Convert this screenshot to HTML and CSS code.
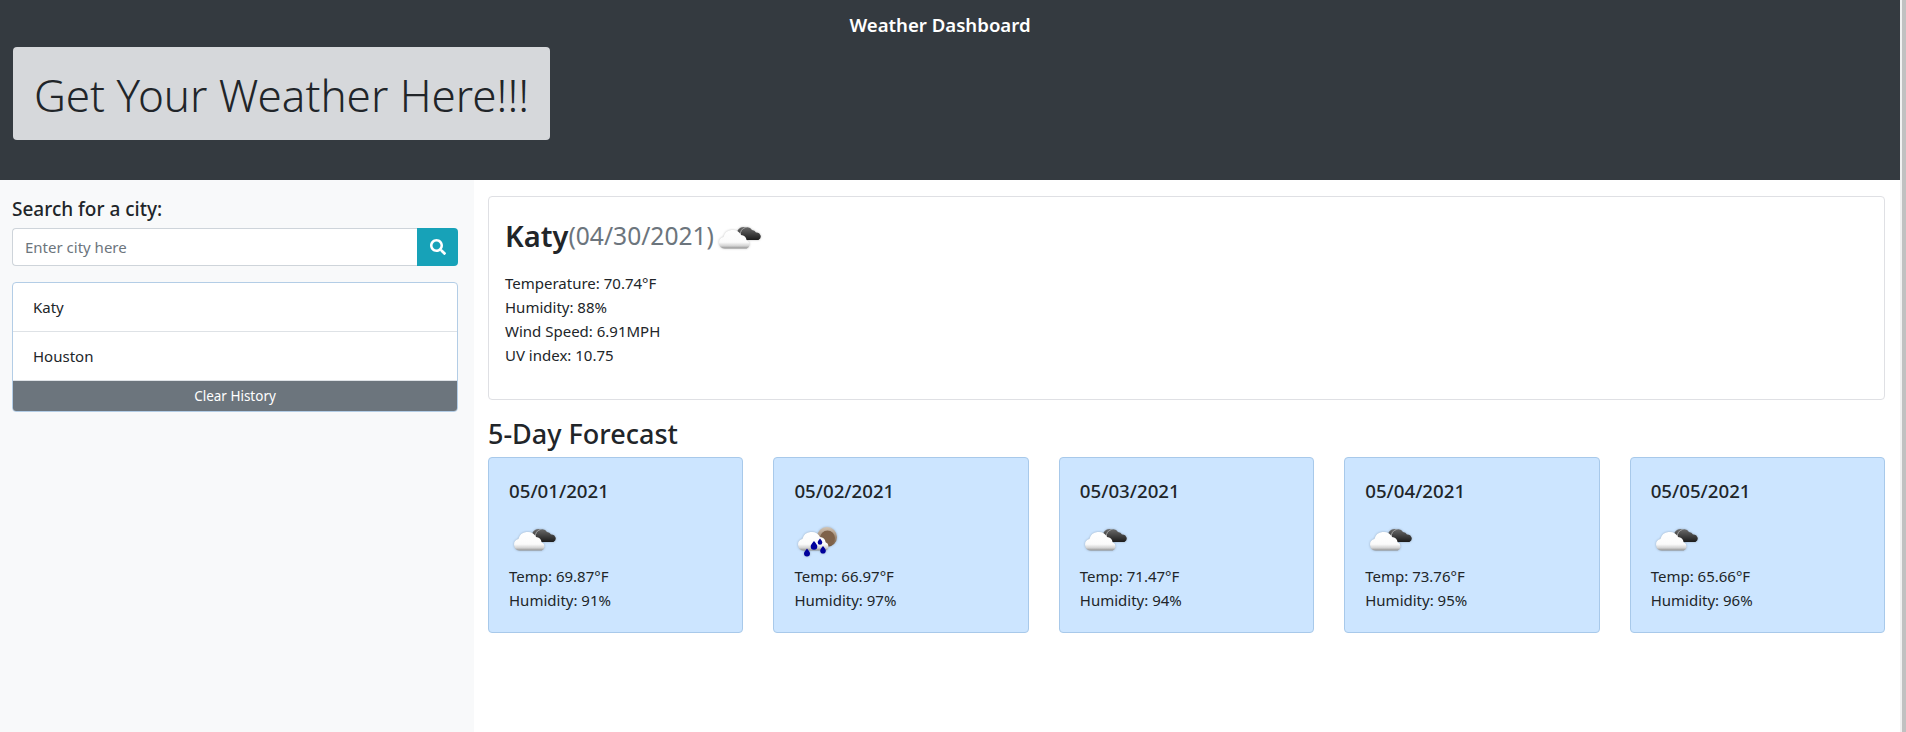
FILE: index.html
```html
<!DOCTYPE html>
<html lang="en">
<head>
    <meta charset="UTF-8">
    <title>Weather Dashboard</title>
    <link rel="stylesheet" href="styles.css">
</head>
<body>
    <!-- Shared weather icons -->
    <svg class="icon-defs" width="0" height="0">
        <defs>
            <linearGradient id="white-cloud" x1="0" y1="0" x2="0" y2="1">
                <stop offset="0" stop-color="#ffffff"/>
                <stop offset="0.66" stop-color="#fbfbfb"/>
                <stop offset="0.86" stop-color="#d2d2d2"/>
                <stop offset="1" stop-color="#8f8f8f"/>
            </linearGradient>
            <linearGradient id="dark-cloud" x1="0" y1="0" x2="0" y2="1">
                <stop offset="0" stop-color="#6a6a6a"/>
                <stop offset="1" stop-color="#1c1c1c"/>
            </linearGradient>
            <linearGradient id="brown-sun" x1="0" y1="0" x2="0" y2="1">
                <stop offset="0" stop-color="#d3c5b5"/>
                <stop offset="1" stop-color="#6f5238"/>
            </linearGradient>
            <symbol id="clouds" viewBox="0 0 50 50">
                <path d="M27 29a6.5 6.5 0 0 1 5-12.5a5.5 5.5 0 0 1 6 2.500a4.500 4.500 0 0 1 4 2.500a4 4 0 0 1 2.500 7.500h-13z" fill="url(#dark-cloud)"/>
                <path d="M26.500 24a6.500 6.500 0 0 1 5-7.500" fill="none" stroke="#a9a9a9" stroke-width="1"/>
                <path d="M11 37.500a5.800 5.800 0 0 1-1.600-11.400a9.500 9.500 0 0 1 17.600-2a6.200 6.200 0 0 1 5.600 5.200a4.400 4.400 0 0 1 .2 8.200z" fill="url(#white-cloud)"/>
            </symbol>
            <symbol id="rain" viewBox="0 0 50 50">
                <circle cx="33" cy="24" r="10" fill="url(#brown-sun)"/>
                <circle cx="33.500" cy="25" r="7.500" fill="#7f6249"/>
                <path d="M10 37.500a5.800 5.800 0 0 1-1.600-11.400a9.500 9.500 0 0 1 17.600-2a6.200 6.200 0 0 1 5.600 5.200a4.400 4.400 0 0 1 .2 8.200z" fill="url(#white-cloud)"/>
                <path d="M13 35.500c2 2.500 3 3.500 3 5a3 3 0 0 1-6 0c0-1.500 1-2.500 3-5z" fill="#00009c"/>
                <path d="M20 28c2.200 2.800 3.300 3.800 3.300 5.500a3.300 3.300 0 0 1-6.600 0c0-1.700 1.100-2.700 3.300-5.500z" fill="#00009c"/>
                <path d="M26 25.500c1.500 2 2.300 2.800 2.300 4a2.300 2.300 0 0 1-4.600 0c0-1.200.8-2 2.300-4z" fill="#00009c"/>
                <path d="M29 33c1.900 2.400 2.800 3.300 2.800 4.700a2.800 2.800 0 0 1-5.600 0c0-1.400.9-2.300 2.800-4.700z" fill="#00009c"/>
            </symbol>
        </defs>
    </svg>

    <div class="page">
        <div class="content">
            <header class="top-bar">
                <div class="brand">Weather Dashboard</div>
                <div class="jumbo">Get Your Weather Here!!!</div>
            </header>

            <div class="columns">
                <!-- Search and history -->
                <aside class="sidebar">
                    <label class="search-label" for="city-input">Search for a city:</label>
                    <div class="search-group">
                        <input class="search-input" id="city-input" type="text" placeholder="Enter city here">
                        <button class="search-button" aria-label="Search">
                            <svg class="search-icon" viewBox="0 0 512 512"><path fill="#fff" d="M505 442.700L405.300 343c-4.500-4.500-10.600-7-17-7H372c27.600-35.300 44-79.700 44-128C416 93.100 322.900 0 208 0S0 93.100 0 208s93.100 208 208 208c48.300 0 92.700-16.400 128-44v16.300c0 6.400 2.500 12.500 7 17l99.700 99.700c9.400 9.400 24.600 9.400 33.900 0l28.300-28.300c9.400-9.400 9.400-24.600.1-34zM208 336c-70.700 0-128-57.200-128-128 0-70.700 57.200-128 128-128 70.700 0 128 57.200 128 128 0 70.700-57.200 128-128 128z"/></svg>
                        </button>
                    </div>
                    <div class="history">
                        <div class="history-item">Katy</div>
                        <div class="history-item">Houston</div>
                        <button class="clear-button">Clear History</button>
                    </div>
                </aside>

                <!-- Current weather and forecast -->
                <main class="main">
                    <section class="today">
                        <h2 class="today-title">Katy<span class="today-date">(04/30/2021)</span><svg class="today-icon"><use href="#clouds"/></svg></h2>
                        <p class="today-line">Temperature: 70.74°F</p>
                        <p class="today-line">Humidity: 88%</p>
                        <p class="today-line">Wind Speed: 6.91MPH</p>
                        <p class="today-line">UV index: 10.75</p>
                    </section>

                    <h3 class="forecast-title">5-Day Forecast</h3>
                    <div class="forecast">
                        <div class="day">
                            <h5 class="day-date">05/01/2021</h5>
                            <svg class="day-icon"><use href="#clouds"/></svg>
                            <p class="day-line">Temp: 69.87°F</p>
                            <p class="day-line">Humidity: 91%</p>
                        </div>
                        <div class="day">
                            <h5 class="day-date">05/02/2021</h5>
                            <svg class="day-icon"><use href="#rain"/></svg>
                            <p class="day-line">Temp: 66.97°F</p>
                            <p class="day-line">Humidity: 97%</p>
                        </div>
                        <div class="day">
                            <h5 class="day-date">05/03/2021</h5>
                            <svg class="day-icon"><use href="#clouds"/></svg>
                            <p class="day-line">Temp: 71.47°F</p>
                            <p class="day-line">Humidity: 94%</p>
                        </div>
                        <div class="day">
                            <h5 class="day-date">05/04/2021</h5>
                            <svg class="day-icon"><use href="#clouds"/></svg>
                            <p class="day-line">Temp: 73.76°F</p>
                            <p class="day-line">Humidity: 95%</p>
                        </div>
                        <div class="day">
                            <h5 class="day-date">05/05/2021</h5>
                            <svg class="day-icon"><use href="#clouds"/></svg>
                            <p class="day-line">Temp: 65.66°F</p>
                            <p class="day-line">Humidity: 96%</p>
                        </div>
                    </div>
                </main>
            </div>
        </div>

        <!-- Browser scrollbar, cut off at the edge of the screenshot -->
        <div class="scrollbar"><div class="scrollbar-thumb"></div></div>
    </div>
</body>
</html>
```

FILE: styles.css
```css
/* Page frame */
html, body {
    margin: 0;
    height: 100%;
    overflow: hidden;
}

body {
    font-family: "Noto Sans", "Open Sans", sans-serif;
    font-size: 15px;
    line-height: 24px;
    color: #212529;
    background-color: #fff;
}

.icon-defs {
    position: absolute;
}

.page {
    display: flex;
    height: 732px;
}

.content {
    flex: 1;
    min-width: 0;
    display: flex;
    flex-direction: column;
}

.scrollbar {
    width: 4px;
    padding-left: 2px;
    background-color: #f1f1f1;
}

.scrollbar-thumb {
    height: 100%;
    background-color: #c1c1c1;
}

/* Header */
.top-bar {
    height: 180px;
    box-sizing: border-box;
    padding: 12px 13px 0;
    background-color: #343a40;
}

.brand {
    height: 35px;
    padding-right: 20px;
    font-size: 18.6px;
    line-height: 26px;
    font-weight: 600;
    color: #fff;
    text-align: center;
}

.jumbo {
    width: 537px;
    height: 93px;
    box-sizing: border-box;
    border-radius: 4px;
    background-color: #d6d8db;
    font-size: 44px;
    line-height: 97px;
    font-weight: 300;
    text-align: center;
}

/* Two columns under the header */
.columns {
    flex: 1;
    display: flex;
}

.sidebar {
    width: 474px;
    box-sizing: border-box;
    padding: 16px 16px 0 12px;
    background-color: #f8f9fa;
}

.search-label {
    display: block;
    height: 32px;
    font-size: 19px;
    line-height: 26px;
    font-weight: 500;
}

.search-group {
    display: flex;
    width: 446px;
    height: 38px;
}

.search-input {
    flex: 1;
    min-width: 0;
    box-sizing: border-box;
    padding: 0 12px;
    border: 1px solid #ced4da;
    border-right: none;
    border-radius: 4px 0 0 4px;
    font-family: inherit;
    font-size: 15px;
    color: #495057;
    background-color: #fff;
}

.search-input::placeholder {
    color: #6c757d;
    opacity: 1;
}

.search-button {
    width: 41px;
    display: flex;
    align-items: center;
    justify-content: center;
    padding: 0;
    border: none;
    border-radius: 0 4px 4px 0;
    background-color: #17a2b8;
}

.search-icon {
    width: 16px;
    height: 16px;
}

.history {
    width: 446px;
    height: 130px;
    box-sizing: border-box;
    margin-top: 16px;
    display: flex;
    flex-direction: column;
    border: 1px solid #b3cde6;
    border-radius: 4px;
    background-color: #fff;
    overflow: hidden;
}

.history-item {
    height: 49px;
    box-sizing: border-box;
    padding-left: 20px;
    line-height: 48px;
    font-size: 15px;
    border-bottom: 1px solid #dee2e6;
}

.clear-button {
    flex: 1;
    padding: 0;
    border: none;
    font-family: inherit;
    font-size: 13.5px;
    color: #fff;
    background-color: #6c757d;
}

.main {
    flex: 1;
    min-width: 0;
    padding: 16px 15px 0 14px;
}

/* Current weather */
.today {
    height: 204px;
    box-sizing: border-box;
    padding: 16px 16px 0;
    border: 1px solid #dfe0e4;
    border-radius: 4px;
}

.today-title {
    display: flex;
    align-items: center;
    height: 46px;
    margin: 0 0 12px;
    font-size: 29px;
    font-weight: 600;
}

.today-date {
    font-size: 24.6px;
    font-weight: 400;
    color: #6c757d;
}

.today-icon {
    width: 50px;
    height: 50px;
    filter: drop-shadow(0 0 1px rgba(0, 0, 0, 0.25));
}

.today-line {
    margin: 0;
}

/* Forecast */
.forecast-title {
    height: 38px;
    margin: 15px 0 0;
    font-size: 27px;
    line-height: 38px;
    font-weight: 500;
}

.forecast {
    display: flex;
    gap: 30px;
    margin-top: 4px;
}

.day {
    flex: 1;
    height: 176px;
    box-sizing: border-box;
    padding: 20px 20px 0;
    border: 1px solid #a8c9ea;
    border-radius: 4px;
    background-color: #cce5ff;
}

.day-date {
    height: 35px;
    margin: 0;
    font-size: 18.7px;
    line-height: 26px;
    font-weight: 500;
}

.day-icon {
    display: block;
    width: 50px;
    height: 50px;
    margin-bottom: 1px;
    filter: drop-shadow(0 0 1px rgba(0, 0, 0, 0.25));
}

.day-line {
    margin: 0;
}
```
